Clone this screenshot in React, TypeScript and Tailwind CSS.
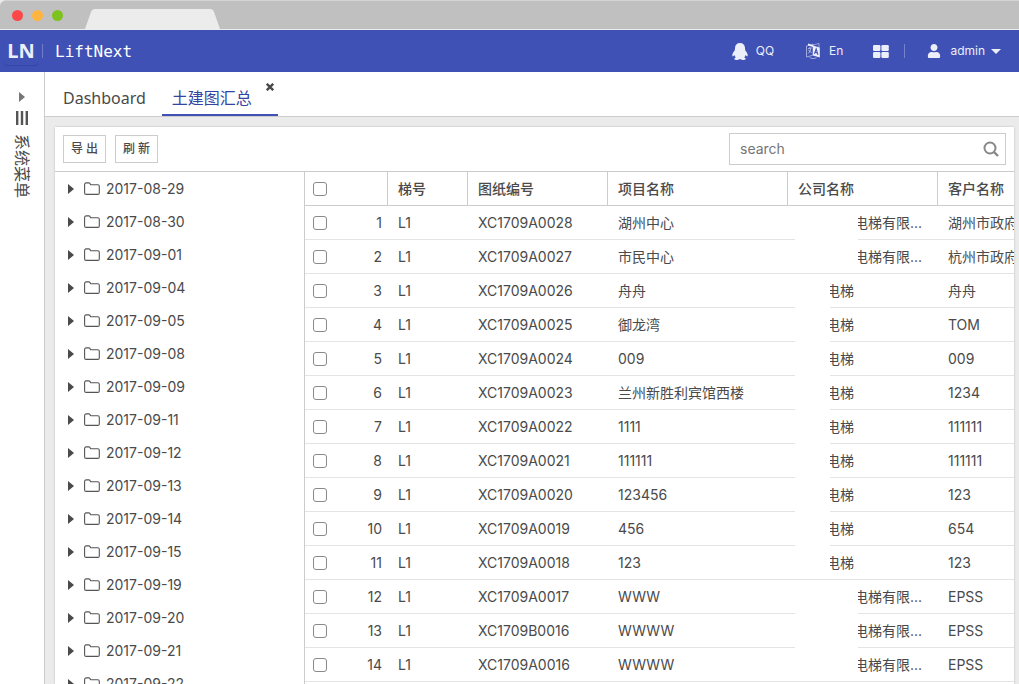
import { useState } from "react";
import { FaUser } from "react-icons/fa";

interface DrawingRow {
  code: string;
  project: string;
  company: string;
  customer: string;
  mask: string;
}

const WIDE = "left-[7px] w-[63px]";
const NARROW = "left-[7px] w-[35px]";

const dates = [
  "2017-08-29",
  "2017-08-30",
  "2017-09-01",
  "2017-09-04",
  "2017-09-05",
  "2017-09-08",
  "2017-09-09",
  "2017-09-11",
  "2017-09-12",
  "2017-09-13",
  "2017-09-14",
  "2017-09-15",
  "2017-09-19",
  "2017-09-20",
  "2017-09-21",
  "2017-09-22",
];

const rows: DrawingRow[] = [
  { code: "XC1709A0028", project: "湖州中心", company: "电梯有限...", customer: "湖州市政府", mask: WIDE },
  { code: "XC1709A0027", project: "市民中心", company: "电梯有限...", customer: "杭州市政府", mask: WIDE },
  { code: "XC1709A0026", project: "舟舟", company: "电梯", customer: "舟舟", mask: NARROW },
  { code: "XC1709A0025", project: "御龙湾", company: "电梯", customer: "TOM", mask: NARROW },
  { code: "XC1709A0024", project: "009", company: "电梯", customer: "009", mask: NARROW },
  { code: "XC1709A0023", project: "兰州新胜利宾馆西楼", company: "电梯", customer: "1234", mask: NARROW },
  { code: "XC1709A0022", project: "1111", company: "电梯", customer: "111111", mask: NARROW },
  { code: "XC1709A0021", project: "111111", company: "电梯", customer: "111111", mask: NARROW },
  { code: "XC1709A0020", project: "123456", company: "电梯", customer: "123", mask: NARROW },
  { code: "XC1709A0019", project: "456", company: "电梯", customer: "654", mask: NARROW },
  { code: "XC1709A0018", project: "123", company: "电梯", customer: "123", mask: NARROW },
  { code: "XC1709A0017", project: "WWW", company: "电梯有限...", customer: "EPSS", mask: WIDE },
  { code: "XC1709B0016", project: "WWWW", company: "电梯有限...", customer: "EPSS", mask: WIDE },
  { code: "XC1709A0016", project: "WWWW", company: "电梯有限...", customer: "EPSS", mask: WIDE },
];

const checkboxClass =
  "block h-3.5 w-3.5 appearance-none rounded-[3px] border border-[#8a8a8a] bg-white checked:bg-[#3f51b5]";

function CaretRight() {
  return (
    <svg width="6" height="10" viewBox="0 0 6 10" fill="currentColor">
      <path d="M0 0 6 5 0 10z" />
    </svg>
  );
}

function FolderIcon() {
  return (
    <svg width="16" height="14" viewBox="0 0 16 14" fill="none" stroke="#555" strokeWidth="1.1">
      <path d="M.6 2.4A1.5 1.5 0 0 1 2.1.9h2.7c.9 0 1.4.4 1.4 1.2 0 .5.3.7.8.7h6.8a1.5 1.5 0 0 1 1.5 1.5v6.6a1.5 1.5 0 0 1-1.5 1.5H2.1A1.5 1.5 0 0 1 .6 10.9z" />
    </svg>
  );
}

function QqIcon() {
  return (
    <svg width="16" height="17" viewBox="0 0 16 17" fill="currentColor">
      <path d="M8 0C4.900 0 3 2 3 5v1.300C2.600 6.700 2.500 7.200 2.600 7.700 1.300 9 .3 10.800.3 12.300c0 .9.300 1.200.700 1.100.4-.1.9-.6 1.300-1.300.3.900.8 1.700 1.500 2.400-1 .3-1.500.7-1.500 1.200 0 .9 1.200 1.200 2.900 1.200 1.300 0 2.300-.3 2.800-.8.5.5 1.500.8 2.800.8 1.700 0 2.900-.3 2.900-1.200 0-.5-.5-.9-1.500-1.200.7-.7 1.200-1.500 1.500-2.400.4.700.9 1.200 1.300 1.300.4.100.7-.2.7-1.100 0-1.500-1-3.300-2.300-4.600.1-.5 0-1-.4-1.400V5c0-3-1.900-5-5-5z" />
    </svg>
  );
}

function TranslateIcon() {
  return (
    <svg width="14" height="16" viewBox="0 0 14 16" fill="none" stroke="#eceefa">
      <path d="M.5 3 7 1.2v11L.5 14z" strokeWidth=".8" opacity=".7" />
      <path d="M2 5.800l3.600-1M3.600 4.200l.3 1.200M4.800 5.300C4.400 7.500 3.500 9.300 2 10.600M2.400 6.800c.8 1.200 2 2.300 3.200 2.700" strokeWidth=".8" opacity=".8" />
      <path d="M2 .6 7 2.300v1.800L2 2.400z" fill="#eceefa" stroke="none" />
      <path d="M7 2.600 13.800 4.600V14.400L7 12.400z" fill="#eceefa" stroke="none" />
      <path d="M7 2 13 .5v3.800" strokeWidth=".7" opacity=".7" />
      <path d="M8.500 10.800 10.200 6l1.800 5.800M9 9.300l2.300.7" stroke="#3f51b5" strokeWidth="1.100" />
      <path d="M3.500 14.500c2 1.300 5 1.300 7 .2" strokeWidth=".8" opacity=".7" />
    </svg>
  );
}

function GridIcon() {
  return (
    <svg width="16" height="13" viewBox="0 0 16 13" fill="currentColor">
      <rect width="7.400" height="6" rx="1.200" />
      <rect x="8.400" width="7.400" height="6" rx="1.200" />
      <rect y="7" width="7.400" height="6" rx="1.200" />
      <rect x="8.400" y="7" width="7.400" height="6" rx="1.200" />
    </svg>
  );
}

function SearchIcon() {
  return (
    <svg width="16" height="16" viewBox="0 0 16 16" fill="none" stroke="currentColor" strokeWidth="2">
      <circle cx="7" cy="7" r="5.500" />
      <path d="M11 11 15 15" strokeWidth="2.400" />
    </svg>
  );
}

function BrowserBar() {
  return (
    <div className="flex h-[30px] items-end rounded-tl-md border-t border-b border-t-[#d4d4d4] border-b-[#ececec] bg-[#c0c0c0]">
      <div className="flex w-[85px] gap-[9px] self-center pl-3">
        <span className="h-[11px] w-[11px] rounded-full bg-[#fc4848]" />
        <span className="h-[11px] w-[11px] rounded-full bg-[#fdb53f]" />
        <span className="h-[11px] w-[11px] rounded-full bg-[#7dc21e]" />
      </div>
      <svg width="135" height="20" viewBox="0 0 135 20" fill="#ececec">
        <path d="M0 20 6 3Q7 0 10 0H125Q128 0 129 3L135 20z" />
      </svg>
    </div>
  );
}

function Header() {
  return (
    <header className="flex h-[42px] items-center bg-[#3f51b5] text-[#eceefa]">
      <div className="ml-1 flex h-7 w-[34px] items-center justify-center rounded-sm font-['Noto_Sans'] text-xl font-bold shadow-[0_1px_1px_#3545a5]">
        LN
      </div>
      <span className="ml-1 h-3.5 w-px bg-[#6f7dc8]" />
      <h1 className="ml-3 pt-0.5 font-['DejaVu_Sans_Mono',monospace] text-base text-white">LiftNext</h1>
      <div className="ml-auto flex items-center text-xs">
        <button className="flex items-center gap-2">
          <QqIcon />
          QQ
        </button>
        <button className="ml-8 flex items-center gap-[9px]">
          <TranslateIcon />
          En
        </button>
        <button aria-label="Apps" className="ml-[30px]">
          <GridIcon />
        </button>
        <span className="ml-[15px] h-3.5 w-px bg-[#7683cb]" />
        <button className="ml-[22px] mr-[18px] flex items-center gap-[9px]">
          <FaUser size={14} />
          <span className="flex items-center gap-1.5">
            admin
            <svg width="10" height="5" viewBox="0 0 10 5" fill="currentColor">
              <path d="M0 0H10L5 5z" />
            </svg>
          </span>
        </button>
      </div>
    </header>
  );
}

function Sidebar() {
  return (
    <aside className="flex w-[45px] shrink-0 flex-col items-center border-r border-[#ccc] bg-white pt-5">
      <button aria-label="Expand menu" className="text-[#777]">
        <CaretRight />
      </button>
      <svg className="mt-[9px]" width="12" height="14" viewBox="0 0 12 14" fill="#555">
        <path d="M0 0h2.400v14H0zM4.800 0h2.400v14H4.800zM9.600 0H12v14H9.600z" />
      </svg>
      <span className="mt-[9px] text-base leading-5 [text-orientation:sideways] [writing-mode:vertical-rl]">
        系统菜单
      </span>
    </aside>
  );
}

function Tabs() {
  return (
    <nav className="flex h-[45px] items-end border-b border-[#ccc] bg-white pl-[3px] font-['Noto_Sans','Noto_Sans_CJK_SC',sans-serif] text-base">
      <button className="h-11 pt-2 pr-4 pl-[15px]">Dashboard</button>
      <div className="relative flex h-11 border-b-2 border-[#3f51b5]">
        <button className="pt-2.5 pr-[26px] pl-2.5 text-[#3345a0]">土建图汇总</button>
        <button aria-label="Close tab" className="absolute top-[11px] right-1">
          <svg width="8" height="8" viewBox="0 0 8 8" stroke="currentColor" strokeWidth="2.400">
            <path d="M.8.8l6.400 6.400M7.200.8.8 7.200" />
          </svg>
        </button>
      </div>
    </nav>
  );
}

function DateTree() {
  return (
    <ul className="w-[250px] shrink-0 overflow-hidden border-r border-[#ccc]">
      {dates.map((date) => (
        <li key={date}>
          <button className="flex h-[33px] w-full items-center pl-[13px]">
            <CaretRight />
            <span className="ml-2.5">
              <FolderIcon />
            </span>
            <span className="ml-1.5">{date}</span>
          </button>
        </li>
      ))}
    </ul>
  );
}

function DrawingTable() {
  return (
    <div className="min-w-0 flex-1 overflow-hidden">
      <table className="w-[762px] table-fixed border-separate border-spacing-0 text-left">
        <colgroup>
          <col className="w-[32px]" />
          <col className="w-[51px]" />
          <col className="w-20" />
          <col className="w-[140px]" />
          <col className="w-[180px]" />
          <col className="w-[150px]" />
          <col />
        </colgroup>
        <thead>
          <tr className="h-[34px] *:border-b *:border-[#ccc]">
            <th className="pl-2">
              <input type="checkbox" aria-label="Select all" className={checkboxClass} />
            </th>
            <th className="border-r" aria-label="No." />
            {["梯号", "图纸编号", "项目名称", "公司名称", "客户名称"].map((title) => (
              <th key={title} className="border-r pl-2.5 font-medium">
                {title}
              </th>
            ))}
          </tr>
        </thead>
        <tbody>
          {rows.map((row, i) => (
            <tr key={row.code} className="h-[34px] *:border-b *:border-[#e4e4e4]">
              <td className="pl-2">
                <input type="checkbox" aria-label={`Select ${row.code}`} className={checkboxClass} />
              </td>
              <td className="pr-1.5 text-right">{i + 1}</td>
              <td className="pl-2.5">L1</td>
              <td className="pl-2.5">{row.code}</td>
              <td className="pl-2.5">{row.project}</td>
              <td className="relative">
                <span className={row.mask === WIDE ? "pl-[66px]" : "pl-[38px]"}>{row.company}</span>
                <span
                  className={`absolute top-0 bg-white ${row.mask} ${
                    rows[i + 1]?.mask === row.mask ? "-bottom-px" : "bottom-0"
                  }`}
                />
              </td>
              <td className="overflow-hidden pl-2.5 whitespace-nowrap">{row.customer}</td>
            </tr>
          ))}
        </tbody>
      </table>
    </div>
  );
}

export default function App() {
  const [query, setQuery] = useState("");

  return (
    <div className="flex h-screen flex-col overflow-hidden bg-[#ebebeb] font-['Inter','Noto_Sans_CJK_SC',sans-serif] text-sm text-[#4a4a4a]">
      <BrowserBar />
      <Header />
      <div className="flex min-h-0 flex-1">
        <Sidebar />
        <main className="flex min-w-0 flex-1 flex-col">
          <Tabs />
          <section className="mt-2.5 mr-[5px] ml-2.5 flex min-h-0 flex-1 flex-col bg-white shadow-[0_0_2px_#bbb]">
            <div className="flex h-[45px] shrink-0 items-center border-b border-[#ccc] px-2">
              <button className="h-7 w-[43px] border border-[#ccc] text-xs font-medium">导 出</button>
              <button className="ml-[9px] h-7 w-[43px] border border-[#ccc] text-xs font-medium">刷 新</button>
              <div className="ml-auto flex h-8 w-[277px] items-center border border-[#ccc] px-2.5">
                <input
                  type="text"
                  aria-label="search"
                  placeholder="search"
                  value={query}
                  onChange={(e) => setQuery(e.target.value)}
                  className="min-w-0 flex-1 outline-none placeholder:text-[#757575]"
                />
                <button aria-label="Run search" className="-mr-1 text-[#888]">
                  <SearchIcon />
                </button>
              </div>
            </div>
            <div className="flex min-h-0 flex-1">
              <DateTree />
              <DrawingTable />
            </div>
          </section>
        </main>
      </div>
    </div>
  );
}
